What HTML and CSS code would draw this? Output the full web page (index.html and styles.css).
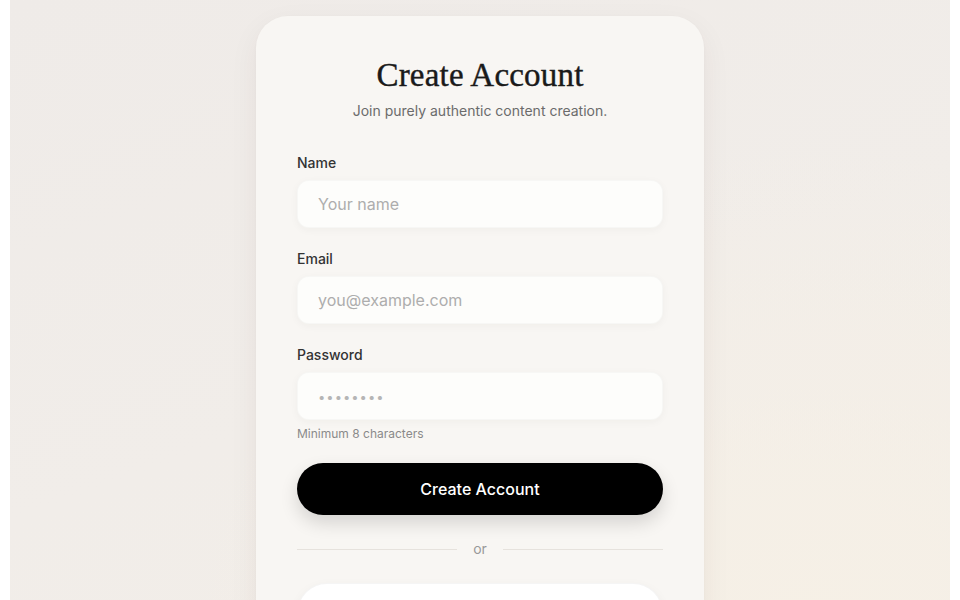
FILE: index.html
```html
<!DOCTYPE html>
<html lang="en">
<head>
<meta charset="utf-8">
<title>Create Account</title>
<link rel="stylesheet" href="styles.css">
</head>
<body>
<main class="page">
  <section class="card">
    <h1 class="title">Create Account</h1>
    <p class="subtitle">Join purely authentic content creation.</p>
    <form class="form">
      <div class="field">
        <label class="label" for="name">Name</label>
        <input class="input" id="name" type="text" placeholder="Your name">
      </div>
      <div class="field">
        <label class="label" for="email">Email</label>
        <input class="input" id="email" type="email" placeholder="you@example.com">
      </div>
      <div class="field field-hint">
        <label class="label" for="password">Password</label>
        <input class="input" id="password" type="password" placeholder="••••••••">
        <span class="hint">Minimum 8 characters</span>
      </div>
      <button class="btn-primary" type="button">Create Account</button>
      <div class="divider"><span class="line"></span><span class="or">or</span><span class="line"></span></div>
      <button class="btn-secondary" type="button">Continue with Google</button>
    </form>
  </section>
</main>
</body>
</html>
```
FILE: styles.css
```css
* { box-sizing: border-box; }
html, body { margin: 0; padding: 0; }
body {
  background: #ffffff;
  font-family: Inter, "Noto Sans", sans-serif;
  color: #333;
}
.page {
  max-width: 940px;
  margin: 0 auto;
  min-height: 100vh;
  padding-top: 16px;
  display: flex;
  justify-content: center;
  align-items: flex-start;
  background:
    radial-gradient(ellipse at 85% 90%, #f6f0e6 0%, rgba(246,240,230,0) 55%),
    linear-gradient(160deg, #efebe8 0%, #f1ede9 50%, #f3eee7 100%);
}
.card {
  width: 448px;
  background: #f8f6f3;
  border-radius: 32px;
  padding: 40px 41px 60px;
  box-shadow: 0 10px 30px rgba(60, 40, 20, 0.06), 0 1px 3px rgba(60, 40, 20, 0.03);
}
.title {
  margin: 0;
  font-family: "Liberation Serif", "DejaVu Serif", serif;
  font-weight: 400;
  font-size: 33px;
  line-height: 38px;
  text-align: center;
  color: #1a1a1a;
  letter-spacing: 0.2px;
  -webkit-text-stroke: 0.4px #1a1a1a;
}
.subtitle {
  margin: 7px 0 0;
  font-size: 14px;
  line-height: 20px;
  text-align: center;
  color: #6b6b6b;
}
.form {
  margin-top: 32px;
  display: flex;
  flex-direction: column;
}
.field {
  display: flex;
  flex-direction: column;
  margin-bottom: 21px;
}
.field-hint { margin-bottom: 21px; }
.label {
  font-size: 14px;
  line-height: 20px;
  font-weight: 500;
  color: #333;
  margin-bottom: 7px;
}
.input {
  height: 48px;
  border: 1px solid rgba(0, 0, 0, 0.025);
  border-radius: 12px;
  background: #fdfdfb;
  padding: 0 20px;
  font-family: Inter, "Noto Sans", sans-serif;
  font-size: 16px;
  color: #333;
  outline: none;
  box-shadow: 0 2px 8px rgba(60, 40, 20, 0.04);
}
.input::placeholder { color: #adadad; }
#password::placeholder { color: #b5b5b5; letter-spacing: 1px; font-size: 13px; }
.hint {
  margin-top: 6px;
  font-size: 12px;
  line-height: 16px;
  color: #8a8a8a;
}
.btn-primary {
  height: 52px;
  border: none;
  border-radius: 999px;
  background: #000;
  color: #fff;
  font-family: Inter, "Noto Sans", sans-serif;
  font-size: 16px;
  font-weight: 500;
  box-shadow: 0 8px 18px rgba(0, 0, 0, 0.14);
}
.divider {
  display: flex;
  align-items: center;
  gap: 16px;
  margin: 24px 0;
  height: 20px;
}
.line {
  flex: 1;
  height: 1px;
  background: #e6e2dd;
}
.or {
  font-size: 14px;
  line-height: 20px;
  color: #999;
}
.btn-secondary {
  height: 60px;
  border: 1px solid rgba(0, 0, 0, 0.04);
  border-radius: 999px;
  background: #ffffff;
  color: #333;
  font-family: Inter, "Noto Sans", sans-serif;
  font-size: 16px;
  font-weight: 500;
  box-shadow: 0 4px 12px rgba(60, 40, 20, 0.05);
}
```
